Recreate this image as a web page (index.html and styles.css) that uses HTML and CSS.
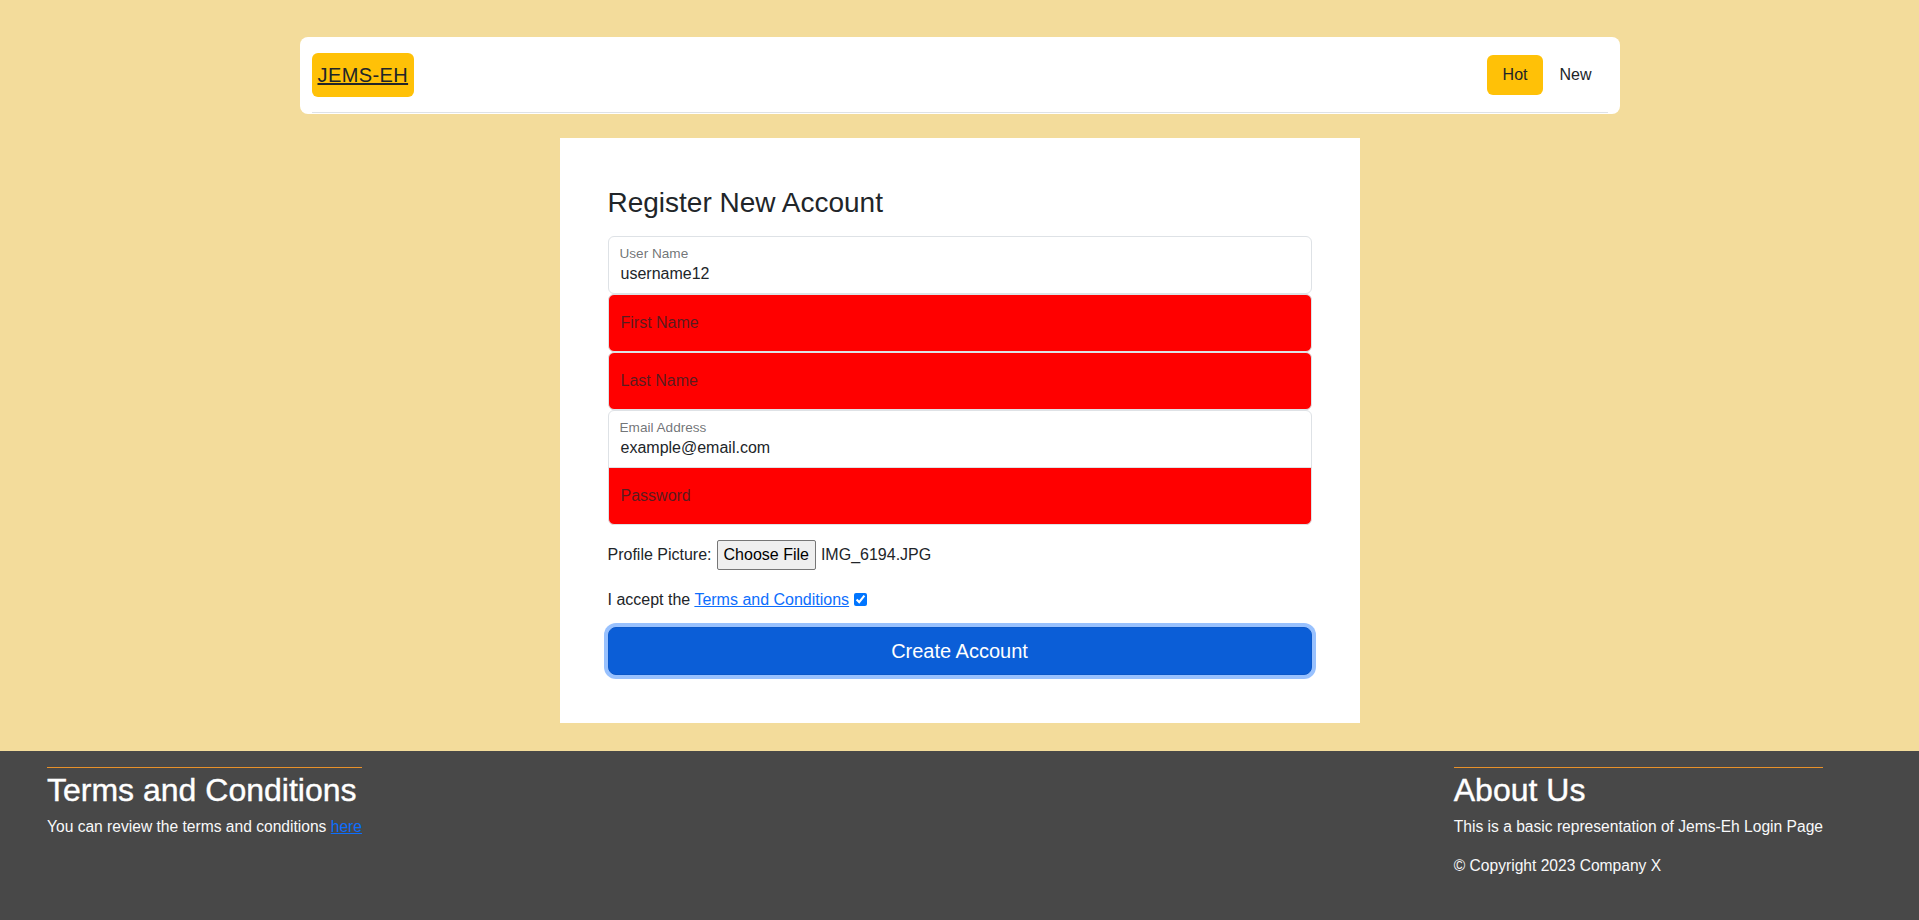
FILE: index.html
```html
<!DOCTYPE html>
<html lang="en">
<head>
<meta charset="utf-8">
<title>Register New Account</title>
<link rel="stylesheet" href="styles.css">
</head>
<body>
<div class="page">
  <nav class="navbar">
    <div class="navbar-inner">
      <a class="brand" href="#">JEMS-EH</a>
      <ul class="nav">
        <li><a class="nav-link active" href="#">Hot</a></li>
        <li><a class="nav-link" href="#">New</a></li>
      </ul>
    </div>
  </nav>

  <main class="card">
    <h3 class="card-title">Register New Account</h3>
    <div class="fields">
      <div class="field filled">
        <span class="field-label">User Name</span>
        <span class="field-value">username12</span>
      </div>
      <div class="field invalid">
        <span class="field-placeholder">First Name</span>
      </div>
      <div class="field invalid">
        <span class="field-placeholder">Last Name</span>
      </div>
      <div class="field filled joined-top">
        <span class="field-label">Email Address</span>
        <span class="field-value">example@email.com</span>
      </div>
      <div class="field invalid joined-bottom">
        <span class="field-placeholder">Password</span>
      </div>
    </div>

    <div class="file-row">
      <span>Profile Picture:</span>
      <span class="file-input"><span class="file-button">Choose File</span>IMG_6194.JPG</span>
    </div>

    <p class="terms-row">I accept the <a href="#" class="link">Terms and Conditions</a><input class="check" type="checkbox" checked></p>

    <button class="btn-create" type="button">Create Account</button>
  </main>
</div>

<footer class="footer">
  <section class="footer-col">
    <h2 class="footer-title">Terms and Conditions</h2>
    <p>You can review the terms and conditions <a href="#" class="link">here</a></p>
  </section>
  <section class="footer-col">
    <h2 class="footer-title">About Us</h2>
    <p>This is a basic representation of Jems-Eh Login Page</p>
    <p>© Copyright 2023 Company X</p>
  </section>
</footer>
</body>
</html>
```

FILE: styles.css
```css
* { box-sizing: border-box; }

html, body {
  margin: 0;
  padding: 0;
}

body {
  font-family: "Liberation Sans", Arial, sans-serif;
  font-size: 16px;
  line-height: 1.5;
  color: #212529;
  background: #f3dc9b;
}

.page {
  padding-top: 37px;
  padding-bottom: 28px;
}

/* Navbar */
.navbar {
  width: 1320px;
  margin: 0 auto;
  background: #ffffff;
  border-radius: 8px;
  padding: 16px 12px 1px;
}

.navbar-inner {
  display: flex;
  align-items: center;
  justify-content: space-between;
  padding-bottom: 15px;
  border-bottom: 1px solid #dee2e6;
}

.brand {
  display: inline-block;
  background: #ffc107;
  color: #212529;
  font-size: 20px;
  line-height: 30px;
  padding: 7px 6px;
  border-radius: 6px;
  text-decoration: underline;
  letter-spacing: 0.4px;
}

.nav {
  list-style: none;
  margin: 0;
  padding: 0;
  display: flex;
}

.nav-link {
  display: block;
  padding: 8px 16px;
  line-height: 24px;
  color: #212529;
  text-decoration: none;
  border-radius: 6px;
}

.nav-link.active {
  background: #ffc107;
}

/* Card */
.card {
  width: 800px;
  margin: 24px auto 0;
  background: #ffffff;
  padding: 48px;
}

.card-title {
  margin: 0 0 16px;
  font-size: 28px;
  font-weight: 500;
  line-height: 1.2;
}

.fields {
  display: flex;
  flex-direction: column;
}

.field {
  height: 58px;
  border: 1px solid #dee2e6;
  border-radius: 6px;
  padding: 0 12px;
  display: flex;
  flex-direction: column;
}

.field.filled {
  background: #ffffff;
  padding-top: 9px;
}

.field.invalid {
  background: #ff0000;
  justify-content: center;
}

.field.joined-top {
  border-bottom-left-radius: 0;
  border-bottom-right-radius: 0;
}

.field.joined-bottom {
  margin-top: -1px;
  border-top-left-radius: 0;
  border-top-right-radius: 0;
}

.field-label {
  font-size: 13.6px;
  line-height: 16px;
  color: rgba(33, 37, 41, 0.65);
  margin-left: -1px;
}

.field-value {
  font-size: 16px;
  line-height: 24px;
  color: #212529;
}

.field-placeholder {
  font-size: 16px;
  line-height: 24px;
  color: rgba(33, 37, 41, 0.75);
}

.file-row {
  margin-top: 15px;
  display: flex;
  align-items: center;
  gap: 5px;
  height: 30px;
}

.file-input {
  display: inline-flex;
  align-items: center;
}

.file-button {
  display: inline-block;
  padding: 2px 6px;
  line-height: 24px;
  background: #efefef;
  border: 1px solid #767676;
  border-radius: 2px;
  margin-right: 5px;
  color: #000000;
}

.terms-row {
  margin: 18px 0 0;
  line-height: 24px;
}

.link {
  color: #0d6efd;
  text-decoration: underline;
}

.check {
  width: 13px;
  height: 13px;
  margin: 0 0 0 5px;
  vertical-align: -1px;
  accent-color: #0075ff;
}

.btn-create {
  display: block;
  width: 100%;
  margin-top: 15px;
  height: 48px;
  border: 1px solid #0a58ca;
  border-radius: 8px;
  background: #0b5ed7;
  color: #ffffff;
  font-family: inherit;
  font-size: 20px;
  line-height: 30px;
  box-shadow: 0 0 0 4px rgba(49, 132, 253, 0.5);
  cursor: pointer;
}

/* Footer */
.footer {
  background: #484848;
  color: #f8f9fa;
  min-height: 169px;
  padding: 16px 96px 16px 47px;
  display: flex;
  justify-content: space-between;
  align-items: flex-start;
}

.footer-col {
  border-top: 1px solid #e8912a;
  padding-top: 3px;
}

.footer-title {
  margin: 0 0 6px;
  font-size: 32px;
  font-weight: 500;
  line-height: 1.2;
  color: #ffffff;
  -webkit-text-stroke: 0.4px #ffffff;
}

.footer-col p {
  margin: 0 0 16px;
  font-size: 15.6px;
}
```
